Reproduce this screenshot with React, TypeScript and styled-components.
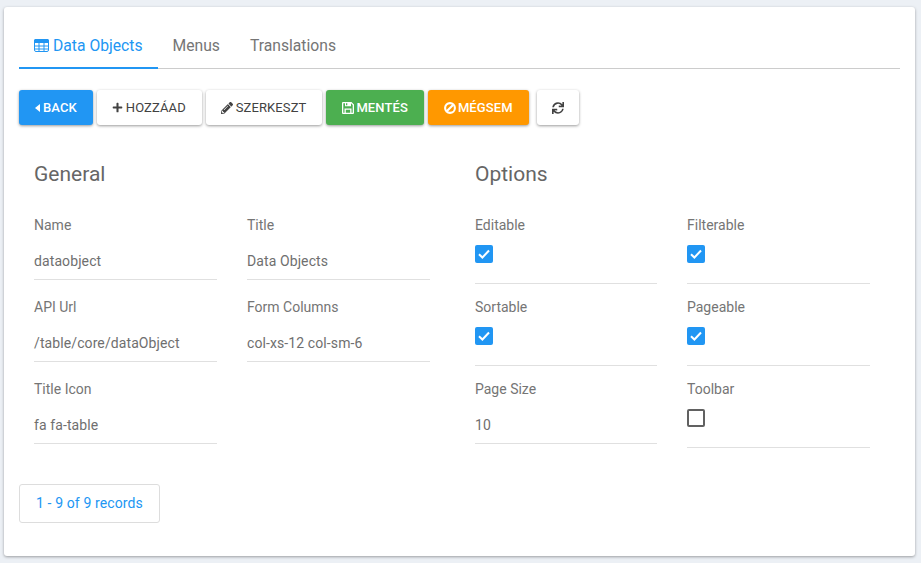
import React from 'react';
import styled, { createGlobalStyle } from 'styled-components';
import { FaPencilAlt, FaPlus, FaSync } from 'react-icons/fa';

const GlobalStyle = createGlobalStyle`
  html, body {
    margin: 0;
    background: #ecf0f5;
    font-family: Roboto, "Liberation Sans", sans-serif;
  }
`;

const TableIcon = () => (
  <svg width="15" height="13" viewBox="0 0 15 13">
    <rect x="0.5" y="0.5" width="14" height="12" rx="1.5" fill="none" stroke="currentColor" />
    <path d="M0 1.5A1.5 1.5 0 0 1 1.5 0h12A1.5 1.5 0 0 1 15 1.5V4H0z" fill="currentColor" />
    <path d="M0 7h15M0 10h15M5 4v9M10 4v9" stroke="currentColor" strokeWidth="1" fill="none" />
  </svg>
);

const CaretLeft = () => (
  <svg width="5" height="8" viewBox="0 0 5 8">
    <path d="M5 0v8L0 4z" fill="currentColor" />
  </svg>
);

const SaveIcon = () => (
  <svg width="12" height="12" viewBox="0 0 12 12">
    <path
      fillRule="evenodd"
      fill="currentColor"
      d="M1 0h8.5L12 2.5V11a1 1 0 0 1-1 1H1a1 1 0 0 1-1-1V1a1 1 0 0 1 1-1zM1.3 1.3v9.4h1.2V6.5h7v4.2h1.2V3L9 1.3v3H3v-3zM4 1.3v2h1.3v-2zM3.8 7.7v3h4.4v-3z"
    />
  </svg>
);

const BanIcon = () => (
  <svg width="12" height="12" viewBox="0 0 12 12">
    <circle cx="6" cy="6" r="4.9" fill="none" stroke="currentColor" strokeWidth="2.1" />
    <path d="M3 9l6-6" stroke="currentColor" strokeWidth="2.1" />
  </svg>
);

const CheckMark = () => (
  <svg width="12" height="10" viewBox="0 0 12 10">
    <path d="M1 5.2l3.4 3.3L11 1.5" fill="none" stroke="currentColor" strokeWidth="2" />
  </svg>
);

type ToolbarButton = {
  label?: string
  icon: React.ReactNode
  variant: 'primary' | 'plain' | 'success' | 'warning'
}

const buttons: ToolbarButton[] = [
  { label: 'BACK', icon: <CaretLeft />, variant: 'primary' },
  { label: 'HOZZÁAD', icon: <FaPlus size={11} />, variant: 'plain' },
  { label: 'SZERKESZT', icon: <FaPencilAlt size={12} />, variant: 'plain' },
  { label: 'MENTÉS', icon: <SaveIcon />, variant: 'success' },
  { label: 'MÉGSEM', icon: <BanIcon />, variant: 'warning' },
];

const generalFields = [
  { label: 'Name', value: 'dataobject' },
  { label: 'Title', value: 'Data Objects' },
  { label: 'API Url', value: '/table/core/dataObject' },
  { label: 'Form Columns', value: 'col-xs-12 col-sm-6' },
  { label: 'Title Icon', value: 'fa fa-table' },
];

const options = [
  { label: 'Editable', checked: true },
  { label: 'Filterable', checked: true },
  { label: 'Sortable', checked: true },
  { label: 'Pageable', checked: true },
  { label: 'Page Size', value: '10' },
  { label: 'Toolbar', checked: false },
];

export default function App() {
  return (
    <>
      <GlobalStyle />
      <Page>
        <Card>
          <Tabs>
            <Tab $active><TableIcon />Data Objects</Tab>
            <Tab>Menus</Tab>
            <Tab>Translations</Tab>
          </Tabs>
          <Toolbar>
            {buttons.map((b) => (
              <Button key={b.label} $variant={b.variant}>{b.icon}{b.label}</Button>
            ))}
            <IconButton><FaSync size={12} /></IconButton>
          </Toolbar>
          <Columns>
            <Section>
              <Heading>General</Heading>
              <FieldGrid $first={183}>
                {generalFields.map((f) => (
                  <Field key={f.label}>
                    <Label>{f.label}</Label>
                    <Value>{f.value}</Value>
                  </Field>
                ))}
              </FieldGrid>
            </Section>
            <Section>
              <Heading>Options</Heading>
              <FieldGrid $first={182}>
                {options.map((o) => (
                  <Field key={o.label}>
                    <Label>{o.label}</Label>
                    {o.value ? (
                      <Value>{o.value}</Value>
                    ) : (
                      <CheckRow>
                        <Check $checked={!!o.checked}>{o.checked && <CheckMark />}</Check>
                      </CheckRow>
                    )}
                  </Field>
                ))}
              </FieldGrid>
            </Section>
          </Columns>
          <Pager>1 - 9 of 9 records</Pager>
        </Card>
      </Page>
    </>
  );
}

const Page = styled.div`
  width: 921px;
  height: 563px;
  box-sizing: border-box;
  padding: 7px 6px 7px 4px;
  overflow: hidden;
`
const Card = styled.div`
  box-sizing: border-box;
  height: 549px;
  padding: 18px 15px 0;
  background: #fff;
  border-radius: 3px;
  box-shadow: 0 1px 3px rgba(0, 0, 0, 0.35);
`
const Tabs = styled.div`
  display: flex;
  height: 43px;
  border-bottom: 1px solid #ccc;
`
const Tab = styled.div<{ $active?: boolean }>`
  display: flex;
  align-items: center;
  gap: 4px;
  height: 44px;
  box-sizing: border-box;
  padding: 0 15px 1px;
  font-size: 15.7px;
  white-space: pre;
  color: ${(p) => (p.$active ? '#2196f3' : '#757575')};
  border-bottom: 2px solid ${(p) => (p.$active ? '#2196f3' : 'transparent')};
`
const Toolbar = styled.div`
  display: flex;
  gap: 4px;
  margin-top: 21px;
`
const variantColors = {
  primary: { bg: '#2196f3', fg: '#fff', weight: 500, gap: 3, left: 16 },
  plain: { bg: '#fff', fg: '#424242', weight: 400, gap: 3, left: 15 },
  success: { bg: '#4caf50', fg: '#fff', weight: 500, gap: 2, left: 16 },
  warning: { bg: '#ff9800', fg: '#fff', weight: 500, gap: 2, left: 16 },
};
const Button = styled.div<{ $variant: ToolbarButton['variant'] }>`
  display: flex;
  align-items: center;
  gap: ${(p) => variantColors[p.$variant].gap}px;
  height: 35px;
  padding: 0 16px 0 ${(p) => variantColors[p.$variant].left}px;
  font-size: 13px;
  letter-spacing: 0.1px;
  font-weight: ${(p) => variantColors[p.$variant].weight};
  color: ${(p) => variantColors[p.$variant].fg};
  background: ${(p) => variantColors[p.$variant].bg};
  border-radius: 3px;
  box-shadow: 0 1px 3px rgba(0, 0, 0, 0.4);
`
const IconButton = styled(Button).attrs({ $variant: 'plain' as const })`
  margin-left: 4px;
  padding: 0 15px;
`
const Columns = styled.div`
  display: grid;
  grid-template-columns: 441px 440px;
  margin-top: 34px;
`
const Section = styled.div`
  padding-left: 15px;
`
const Heading = styled.div`
  font-size: 21px;
  line-height: 30px;
  color: #666;
`
const FieldGrid = styled.div<{ $first: number }>`
  display: grid;
  grid-template-columns: ${(p) => p.$first}px 183px;
  grid-auto-rows: 82px;
  column-gap: 30px;
  align-items: start;
  margin-top: 26px;
`
const Field = styled.div`
  display: flex;
  flex-direction: column;
`
const Label = styled.div`
  font-size: 14px;
  line-height: 20px;
  color: #757575;
`
const Value = styled.div`
  height: 45px;
  box-sizing: border-box;
  padding-top: 16px;
  font-size: 14px;
  letter-spacing: 0.1px;
  line-height: 20px;
  color: #6f6f6f;
  border-bottom: 1px solid #e0e0e0;
`
const CheckRow = styled.div`
  height: 49px;
  box-sizing: border-box;
  padding-top: 10px;
  border-bottom: 1px solid #e0e0e0;
`
const Check = styled.div<{ $checked: boolean }>`
  display: flex;
  align-items: center;
  justify-content: center;
  width: 18px;
  height: 18px;
  box-sizing: border-box;
  border-radius: 2px;
  color: #fff;
  background: ${(p) => (p.$checked ? '#2196f3' : '#fff')};
  border: ${(p) => (p.$checked ? 'none' : '2px solid #616161')};
`
const Pager = styled.div`
  display: inline-block;
  margin-top: 23px;
  padding: 0 16px;
  height: 37px;
  line-height: 37px;
  font-size: 14px;
  letter-spacing: 0.12px;
  color: #2196f3;
  border: 1px solid #ddd;
  border-radius: 3px;
`
